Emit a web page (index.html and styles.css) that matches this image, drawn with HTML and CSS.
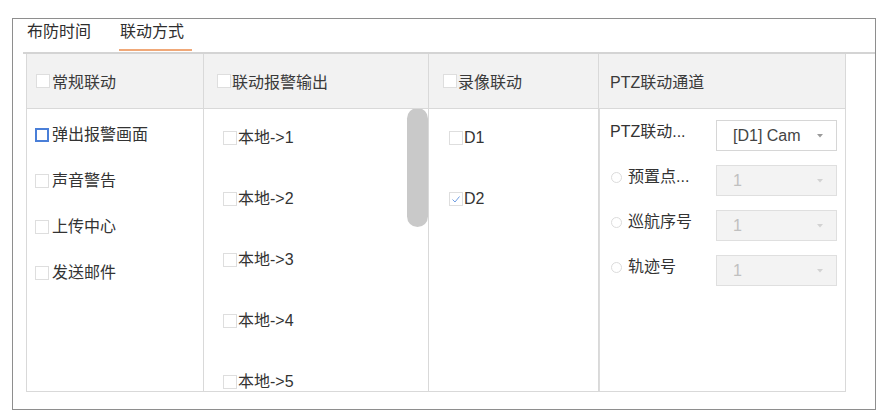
FILE: index.html
```html
<!DOCTYPE html>
<html lang="zh-CN">
<head>
<meta charset="utf-8">
<title>联动方式</title>
<link rel="stylesheet" href="styles.css">
</head>
<body>
<div class="frame">
  <div class="tabs">
    <div class="tab">布防时间</div>
    <div class="tab active">联动方式</div>
  </div>
  <div class="table">
    <div class="col col-normal">
      <div class="head"><span class="cb"></span>常规联动</div>
      <div class="body">
        <div class="item"><span class="cb focus"></span>弹出报警画面</div>
        <div class="item"><span class="cb"></span>声音警告</div>
        <div class="item"><span class="cb"></span>上传中心</div>
        <div class="item"><span class="cb"></span>发送邮件</div>
      </div>
    </div>
    <div class="col col-alarm">
      <div class="head"><span class="cb"></span>联动报警输出</div>
      <div class="body">
        <div class="item"><span class="cb"></span>本地-&gt;1</div>
        <div class="item"><span class="cb"></span>本地-&gt;2</div>
        <div class="item"><span class="cb"></span>本地-&gt;3</div>
        <div class="item"><span class="cb"></span>本地-&gt;4</div>
        <div class="item"><span class="cb"></span>本地-&gt;5</div>
        <div class="scrollbar"></div>
      </div>
    </div>
    <div class="col col-record">
      <div class="head"><span class="cb"></span>录像联动</div>
      <div class="body">
        <div class="item"><span class="cb"></span>D1</div>
        <div class="item"><span class="cb checked"><svg viewBox="0 0 12 12" width="12" height="12"><path d="M2.5 6.5 L5 9 L9.5 3.5" fill="none" stroke="#6f9de2" stroke-width="1"/></svg></span>D2</div>
      </div>
    </div>
    <div class="col col-ptz">
      <div class="head">PTZ联动通道</div>
      <div class="body">
        <div class="row">
          <div class="label">PTZ联动...</div>
          <div class="select"><span>[D1] Cam</span><svg class="arrow" viewBox="0 0 6 4" width="6" height="4"><path d="M0 0 H6 L3 3.5 Z" fill="#9a9a9a"/></svg></div>
        </div>
        <div class="row">
          <div class="label"><span class="radio"></span>预置点...</div>
          <div class="select disabled"><span>1</span><svg class="arrow" viewBox="0 0 6 4" width="6" height="4"><path d="M0 0 H6 L3 3.5 Z" fill="#d2d2d2"/></svg></div>
        </div>
        <div class="row">
          <div class="label"><span class="radio"></span>巡航序号</div>
          <div class="select disabled"><span>1</span><svg class="arrow" viewBox="0 0 6 4" width="6" height="4"><path d="M0 0 H6 L3 3.5 Z" fill="#d2d2d2"/></svg></div>
        </div>
        <div class="row">
          <div class="label"><span class="radio"></span>轨迹号</div>
          <div class="select disabled"><span>1</span><svg class="arrow" viewBox="0 0 6 4" width="6" height="4"><path d="M0 0 H6 L3 3.5 Z" fill="#d2d2d2"/></svg></div>
        </div>
      </div>
    </div>
  </div>
</div>
</body>
</html>
```

FILE: styles.css
```css
* { box-sizing: border-box; }

html, body {
  margin: 0;
  padding: 0;
  background: #ffffff;
}

body {
  font-family: "Liberation Sans", "Noto Sans CJK SC", sans-serif;
  font-size: 16px;
  color: #333333;
}

.frame {
  margin: 18px 0 0 12px;
  width: 864px;
  height: 392px;
  border: 1px solid #8e8e8e;
}

.tabs {
  display: flex;
  margin-left: 10px;
  padding-bottom: 1px;
  border-bottom: 2px solid #d4d4d4;
}

.tab {
  line-height: 26px;
  padding: 0 0 4px 4px;
  border-bottom: 2px solid transparent;
  color: #2e2e2e;
}

.tab.active {
  margin-left: 28px;
  padding-left: 1px;
  padding-right: 8px;
  border-bottom-color: #f0a878;
}

.table {
  display: flex;
  margin-left: 13px;
  width: 820px;
  border-left: 1px solid #d9d9d9;
  border-bottom: 1px solid #d9d9d9;
}

.col {
  display: flex;
  flex-direction: column;
  border-right: 1px solid #d9d9d9;
}

.col-normal { width: 177px; }
.col-alarm { width: 225px; }
.col-record { width: 170px; }
.col-ptz { width: 247px; }

.head {
  height: 55px;
  display: flex;
  align-items: center;
  background: #f2f2f2;
  border-bottom: 1px solid #d9d9d9;
  color: #3a3a3a;
}

.body {
  position: relative;
  height: 282px;
  overflow: hidden;
}

.item {
  display: flex;
  align-items: center;
  line-height: 20px;
  height: 20px;
  white-space: nowrap;
}

.cb {
  display: inline-flex;
  align-items: center;
  justify-content: center;
  flex: none;
  width: 14px;
  height: 14px;
  border: 1px solid #dedede;
  background: #fff;
  margin-right: 1px;
}

.cb.focus {
  border: 2px solid #4a7fd8;
}

.col-normal .head { padding-left: 9px; }
.col-normal .head .cb { margin-right: 2px; }
.col-normal .body { padding: 16px 0 0 8px; }
.col-normal .item { margin-bottom: 26px; }
.col-normal .item .cb { margin-right: 3px; }

.col-alarm .head { padding-left: 13px; }
.col-alarm .body { padding: 19px 0 0 19px; }
.col-alarm .item { margin-bottom: 41px; }

.scrollbar {
  position: absolute;
  top: -1px;
  right: 0;
  width: 21px;
  height: 119px;
  border-radius: 10.5px;
  background: #c9c9c9;
}

.col-record .head { padding-left: 14px; }
.col-record .body { padding: 19px 0 0 20px; }
.col-record .item { margin-bottom: 41px; }

.col-ptz .head { padding-left: 11px; }
.col-ptz .body {
  border-left: 1px solid #dcdcdc;
  padding: 11px 0 0 10px;
}

.row {
  display: flex;
  align-items: flex-start;
  height: 31px;
  margin-bottom: 14px;
}

.label {
  display: flex;
  align-items: center;
  width: 106px;
  line-height: 24px;
  white-space: nowrap;
}

.radio {
  flex: none;
  width: 11px;
  height: 11px;
  margin: 0 6px 0 1px;
  border: 1px solid #dcdcdc;
  border-radius: 50%;
}

.select {
  display: flex;
  align-items: center;
  justify-content: space-between;
  width: 121px;
  height: 31px;
  padding: 0 13px 0 16px;
  border: 1px solid #d6d6d6;
  background: #fff;
  color: #444;
  white-space: nowrap;
  overflow: hidden;
}

.select.disabled {
  background: #f3f3f3;
  border-color: #dfdfdf;
  color: #c0c0c0;
}

.arrow {
  flex: none;
  margin-top: 1px;
}
```
